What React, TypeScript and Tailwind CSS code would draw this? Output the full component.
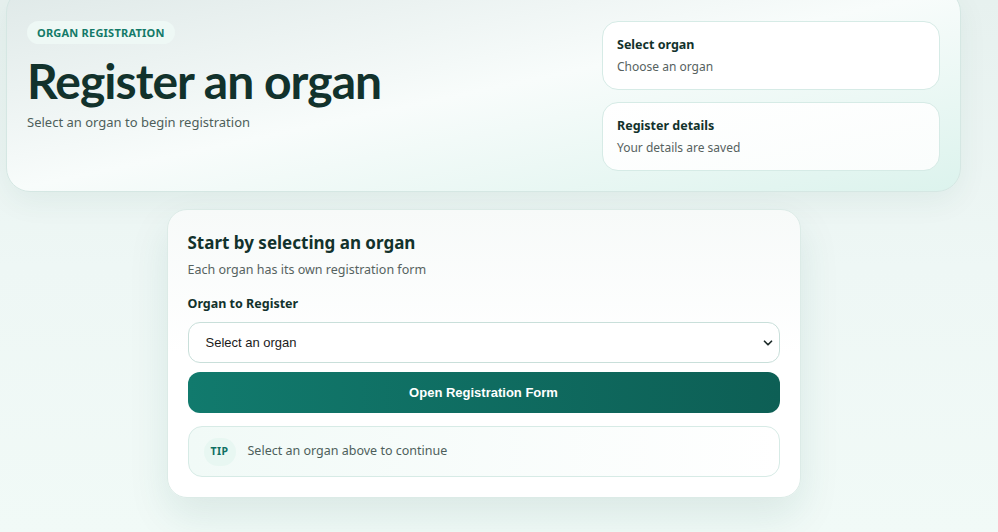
import { ChevronDown } from 'lucide-react';

const font = { fontFamily: '"Noto Sans", "Open Sans", sans-serif' };
const arial = { fontFamily: '"Liberation Sans", Arial, sans-serif' };

export default function App() {
  return (
    <div
      className="min-h-[532px] w-full overflow-hidden bg-gradient-to-b from-[#e7f1ef] via-[#eef7f5] to-[#f1faf7] text-[#13332d]"
      style={font}
    >
      <div className="ml-[6px] w-[955px]">
        {/* Hero */}
        <div className="-mt-[12px] flex h-[204px] justify-between rounded-[24px] border border-[#d5e7e3] bg-gradient-to-br from-[#dfe9e8] via-[#f8fcfb] to-[#dcf3ed] pl-[20px] pr-[20px] pt-[32px] shadow-[0_10px_30px_rgba(16,80,70,0.06)]">
          <div className="flex flex-col items-start">
            <span className="rounded-full bg-[#eef8f5] px-[10px] py-[4px] text-[11px] font-bold uppercase leading-[15px] tracking-[0.02em] text-[#137a68]">
              Organ Registration
            </span>
            <h1
              className="mt-[9px] text-[48px] font-bold leading-[56px] tracking-[-0.02em] text-[#12322c]"
              style={{ fontFamily: 'Lato, "Noto Sans", sans-serif' }}
            >
              Register an organ
            </h1>
            <p className="mt-[4px] text-[13px] text-[#4e5f5b]">Select an organ to begin registration</p>
          </div>
          <div className="flex w-[338px] flex-col gap-[12px]">
            <div className="h-[69px] rounded-[16px] border border-[#d6ebe6] bg-white px-[14px] pt-[13px]">
              <div className="text-[12.5px] font-bold leading-[20px] text-[#12322c]">Select organ</div>
              <div className="mt-[2px] text-[12px] leading-[20px] text-[#56625f]">Choose an organ</div>
            </div>
            <div className="h-[69px] rounded-[16px] border border-[#d6ebe6] bg-gradient-to-br from-white to-[#fafdfc] px-[14px] pt-[13px]">
              <div className="text-[12.5px] font-bold leading-[20px] text-[#12322c]">Register details</div>
              <div className="mt-[2px] text-[12px] leading-[20px] text-[#56625f]">Your details are saved</div>
            </div>
          </div>
        </div>

        {/* Main card */}
        <div className="mx-auto mt-[17px] w-[634px] rounded-[20px] border border-[#dcebe7] bg-gradient-to-b from-[#f7faf9] via-white to-white px-[20px] pb-[20px] pt-[21px] shadow-[0_18px_40px_rgba(16,90,78,0.10)]">
          <h2 className="text-[17px] font-bold leading-[24px] text-[#12322c]">Start by selecting an organ</h2>
          <p className="mt-[5px] text-[12.5px] leading-[20px] text-[#56625f]">Each organ has its own registration form</p>
          <label className="mt-[14px] block text-[12.5px] font-bold leading-[20px] text-[#12322c]">Organ to Register</label>
          <div className="relative mt-[8px] flex h-[41px] items-center rounded-[12px] border border-[#c9dfda] bg-white pl-[17px]">
            <span className="text-[13px] text-[#1b1b1b]" style={arial}>
              Select an organ
            </span>
            <ChevronDown className="absolute right-[4px] h-[14px] w-[14px] text-[#1d2b29]" strokeWidth={3} />
          </div>
          <button
            className="mt-[9px] flex h-[41px] w-full items-center justify-center rounded-[12px] bg-gradient-to-r from-[#117a6d] to-[#0d5f55] text-[13px] font-bold text-white"
            style={arial}
          >
            Open Registration Form
          </button>
          <div className="mt-[13px] flex h-[51px] items-center gap-[12px] rounded-[14px] border border-[#d7ebe6] bg-gradient-to-r from-[#f1faf7] to-white pl-[15px]">
            <span className="flex h-[28px] w-[32px] items-center justify-center rounded-full bg-[#e8f7f2] text-[10.5px] font-bold tracking-[0.04em] text-[#0f6f63]">
              TIP
            </span>
            <span className="text-[12.5px] text-[#4e5f5b]">Select an organ above to continue</span>
          </div>
        </div>
      </div>
    </div>
  );
}
